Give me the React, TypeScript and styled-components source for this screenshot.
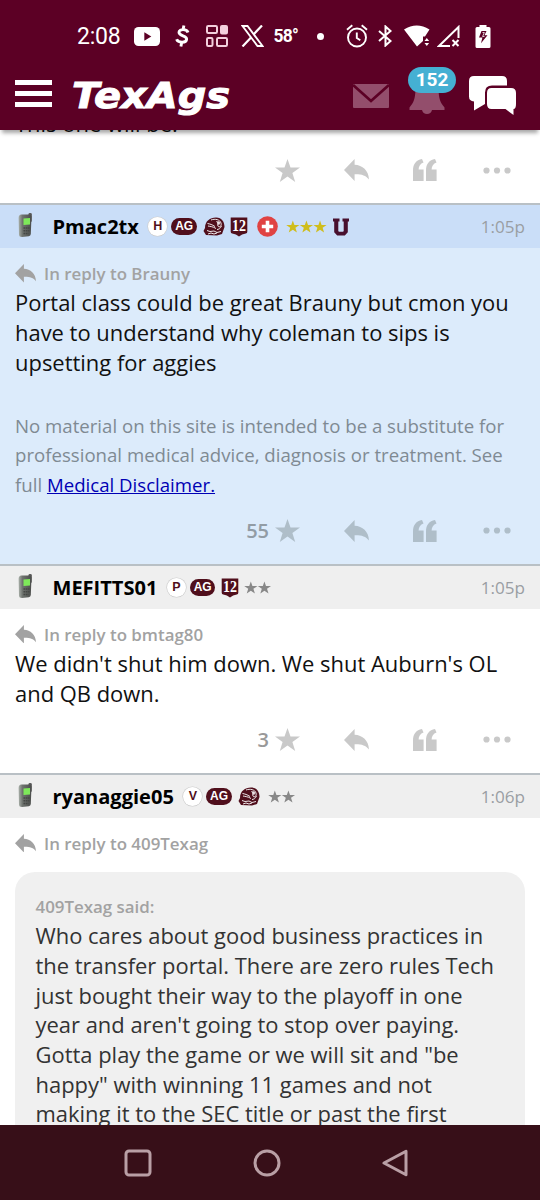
import React from "react";
import styled, { createGlobalStyle } from "styled-components";

const GlobalStyle = createGlobalStyle`
  *, *::before, *::after { box-sizing: border-box; }
  body { margin: 0; background: #fff; font-family: "Open Sans", sans-serif; }
  svg { display: block; flex: none; }
`;

const Screen = styled.div`
  width: 540px;
  height: 1200px;
  display: flex;
  flex-direction: column;
  overflow: hidden;
  background: #fff;
`;

const Top = styled.header`
  position: relative;
  z-index: 1;
  flex: none;
  height: 130px;
  background: #5c0025;
  box-shadow: 0 5px 4px -2px rgba(0, 0, 0, 0.35);
`;

const StatusBar = styled.div`
  height: 72px;
  display: flex;
  align-items: center;
  padding-left: 77px;
  color: #fff;
`;

const Slot = styled.div<{ $w: number; $gap?: number }>`
  flex: none;
  display: flex;
  width: ${(p) => p.$w}px;
  margin-left: ${(p) => p.$gap ?? 0}px;
`;

const Clock = styled.span`
  font: 400 23px/26px Roboto, sans-serif;
  letter-spacing: -0.2px;
  white-space: nowrap;
  padding-top: 2px;
`;

const Temp = styled.span`
  font: 700 17.5px/20px Roboto, sans-serif;
  letter-spacing: -0.8px;
  white-space: nowrap;
`;

const AppBar = styled.div`
  height: 58px;
  display: flex;
  align-items: center;
  padding: 0 24px 0 15px;
`;

const Menu = styled.div`
  display: flex;
  flex-direction: column;
  gap: 6px;
  width: 37px;
  padding-bottom: 16px;
  span { height: 5px; background: #fff; }
`;

const Logo = styled.div`
  margin: 0 auto 0 19.5px;
`;

const BarIcons = styled.div`
  display: flex;
  align-items: flex-start;
  height: 50px;
`;

const MailWrap = styled.div`
  padding-top: 8px;
`;

const BellWrap = styled.div`
  position: relative;
  margin: 0 24px 0 20px;
  padding-top: 4px;
`;

const CountBadge = styled.span`
  position: absolute;
  left: -1px;
  top: -9px;
  width: 48px;
  height: 26px;
  border-radius: 13px;
  background: #45b0d3;
  color: #fff;
  font: 700 19px/26px Roboto, sans-serif;
  text-align: center;
`;

const Feed = styled.main`
  flex: 1;
  min-height: 0;
  overflow: hidden;
`;

const Scrolled = styled.div`
  margin-top: -20.9px;
`;

const Post = styled.article<{ $hot?: boolean }>`
  --icon: ${(p) => (p.$hot ? "#afbec9" : "#c9c9c9")};
  --muted: ${(p) => (p.$hot ? "#929ca5" : "#999")};
  --head: ${(p) => (p.$hot ? "#cadef8" : "#efefef")};
  background: ${(p) => (p.$hot ? "#dcebfb" : "#fff")};
`;

const PostHead = styled.div`
  height: 45px;
  display: flex;
  align-items: center;
  border-top: 2px solid #b9c0c5;
  background: var(--head);
  padding: 0 15px 0 17px;
`;

const PhoneWrap = styled.span`
  padding-bottom: 4px;
`;

const Name = styled.b`
  margin: 0 9.5px 0 19.5px;
  font-size: 20.05px;
  line-height: 30px;
  color: #000;
  white-space: nowrap;
`;

const Time = styled.time`
  margin-left: auto;
  font-size: 17.1px;
  color: #9a9ea3;
`;

const Body = styled.div<{ $first?: boolean }>`
  padding: ${(p) => (p.$first ? 0 : 10)}px 15px 0;
`;

const ReplyTo = styled.div`
  display: flex;
  align-items: center;
  gap: 8px;
  height: 30px;
  font-size: 16.9px;
  font-weight: 600;
  color: #a2a2a2;
  white-space: nowrap;
`;

const Text = styled.p<{ $soft?: boolean }>`
  margin: 0;
  font-size: 21.95px;
  line-height: 29.7px;
  white-space: nowrap;
  color: ${(p) => (p.$soft ? "#333" : "#111")};
`;

const Disclaimer = styled.p`
  margin: 33px 0 0;
  font-size: 18.64px;
  line-height: 29.7px;
  white-space: nowrap;
  color: #7f8a93;
  a { color: #0000b4; text-decoration: underline; }
`;

const Actions = styled.div`
  height: 64.6px;
  display: flex;
  align-items: center;
  justify-content: flex-end;
  padding: 0 29px 2px 0;
`;

const Likes = styled.span`
  margin-right: 6px;
  font-size: 20px;
  font-weight: 600;
  color: var(--muted);
`;

const ActionIcon = styled.span<{ $gap?: number }>`
  margin-left: ${(p) => p.$gap ?? 0}px;
  color: var(--icon);
`;

const Quote = styled.blockquote`
  margin: 14px 0 0;
  padding: 20px 20px 20px 20.5px;
  border-radius: 20px;
  background: #f0f0f0;
`;

const QuoteAuthor = styled.div`
  height: 29px;
  font-size: 16.9px;
  line-height: 30px;
  font-weight: 600;
  color: #a2a2a2;
`;

const Letter = styled.span`
  width: 19px;
  height: 19px;
  border-radius: 50%;
  background: #fff;
  box-shadow: 0 0 0 0.6px #ccc;
  color: #500f1c;
  font: 700 12.5px/19px "Liberation Sans", sans-serif;
  text-align: center;
`;

const AgPill = styled.span`
  width: 25.5px;
  height: 17px;
  margin: 0 6px 0 4px;
  border-radius: 9px;
  background: #500f1c;
  color: #fff;
  font: 700 12px/17px "Liberation Sans", sans-serif;
  text-align: center;
`;

const BadgeGap = styled.span<{ $before?: number }>`
  margin-left: ${(p) => p.$before ?? 0}px;
`;

const NavBar = styled.nav`
  flex: none;
  height: 75px;
  display: flex;
  align-items: center;
  gap: 101px;
  padding-left: 124px;
  background: #370f18;
`;

const STAR = "M12.5 0l3 8.6h9.5l-7.6 5.5 2.8 8.9-7.7-5.4L4.8 23l2.8-8.9L0 8.6h9.5z";

function ReplyIcon({ w = 25 }: { w?: number }) {
  return (
    <svg width={w} height={(w * 22) / 25} viewBox="0 0 25 22" fill="currentColor">
      <path d="M0 11L10.6 0v5.7C18.5 6 24.6 11.3 25 20.4 21.6 16.2 17.3 15 10.6 15.2V22z" />
    </svg>
  );
}

function PostActions({ likes }: { likes?: number }) {
  return (
    <Actions>
      {likes !== undefined && <Likes>{likes}</Likes>}
      <ActionIcon>
        <svg width="25" height="23" viewBox="0 0 25 23" fill="currentColor"><path d={STAR} /></svg>
      </ActionIcon>
      <ActionIcon $gap={43.5}><ReplyIcon /></ActionIcon>
      <ActionIcon $gap={44.5}>
        <svg width="24" height="22" viewBox="0 0 24 22" fill="currentColor">
          <path d="M0 22V11.5C0 5 3.3 1 9 0l1.500 3.400C7.400 4.600 5.600 7 5.600 10.600H10.600V22z" />
          <path d="M13 22V11.500C13 5 16.300 1 22 0l1.500 3.400C20.400 4.600 18.600 7 18.600 10.600H23.600V22z" />
        </svg>
      </ActionIcon>
      <ActionIcon $gap={46}>
        <svg width="28" height="7" viewBox="0 0 28 7" fill="currentColor">
          <circle cx="3.500" cy="3.500" r="3.100" /><circle cx="14" cy="3.500" r="3.100" /><circle cx="24.500" cy="3.500" r="3.100" />
        </svg>
      </ActionIcon>
    </Actions>
  );
}

function Phone() {
  return (
    <PhoneWrap>
      <svg width="16" height="26" viewBox="0 0 16 26">
        <defs>
          <linearGradient id="shell" x1="0" x2="1">
            <stop offset="0" stopColor="#a9b0a9" />
            <stop offset=".3" stopColor="#6f736f" />
            <stop offset="1" stopColor="#4b4d4b" />
          </linearGradient>
        </defs>
        <rect x="11.500" y="1" width="3.300" height="9" rx="1.200" fill="#5c5c5c" />
        <path d="M4.500 2.500H13q1.500 0 1.500 2L13.800 22q-.2 2-2 2.200L5 25q-3 0-3-2.500L1.600 6q0-3.200 2.900-3.500z" fill="url(#shell)" />
        <path d="M6.500 6.500l6.500-.5v6.500l-6.500.5z" fill="#7ee85a" />
        <path d="M6.500 16h6M6.500 18.800h6M6.500 21.600h5" stroke="#454745" strokeWidth="1.500" strokeDasharray="1.700 .6" />
      </svg>
    </PhoneWrap>
  );
}

function Helmet() {
  return (
    <svg width="22" height="19" viewBox="0 0 22 19">
      <path d="M2 11C2 4 7 .5 13 .5S21.500 5 21.500 10L19 17l-5 1.500-11-.5-2.500-4z" fill="#500f1c" />
      <path d="M5 9c2 .5 5 .5 8 2.500M4.500 6.500C7 7 9 7.500 12 9.500M8 3c4-1.500 9-.5 10 3s-2 5-3 3 .5-3-1.500-4.500M18.500 9c-1 2.500-3 3.500-4.500 3.500M4 13.500l3 1 4-.5 3 1.500 4-1M5 17l3-1 3 1 3-1" fill="none" stroke="#fff" strokeWidth=".9" />
      <path d="M13.500 4.500q3-1 3.500 1t-1.500 2.500z" fill="#e9dfe2" />
    </svg>
  );
}

function Shield() {
  return (
    <svg width="18" height="20" viewBox="0 0 18 20">
      <path d="M.7.500h16.600v14.300q0 1.500-1.500 1.700-4 .3-6.800 3-2.800-2.700-6.800-3Q.7 16.300.7 14.800z" fill="#500f1c" />
      <text x="9" y="13.500" textAnchor="middle" textLength="14" lengthAdjust="spacingAndGlyphs" fontFamily="Liberation Serif, serif" fontWeight="700" fontSize="16.500" fill="#fff">12</text>
    </svg>
  );
}

function MedCross() {
  return (
    <svg width="21" height="21" viewBox="0 0 21 21">
      <circle cx="10.500" cy="10.500" r="10.300" fill="#e04343" />
      <path d="M10.500 4.800v11.400M4.800 10.500h11.400" stroke="#fff" strokeWidth="3.600" />
    </svg>
  );
}

function Stars({ n, color }: { n: number; color: string }) {
  return (
    <svg width={n * 13.6} height="13" viewBox={`0 0 ${n * 13.6} 13`} fill={color}>
      {Array.from({ length: n }, (_, i) => (
        <path key={i} d={STAR} transform={`translate(${i * 13.6 + 0.2} .4) scale(.53)`} />
      ))}
    </svg>
  );
}

function BlockU() {
  return (
    <svg width="16" height="18" viewBox="0 0 16 18">
      <path d="M0 .5h6.500v3H5.300v9.200q0 1 1 1h3.400q1 0 1-1V3.500H9.500v-3H16v3h-1.200v10.700l-3 3.300H4.200l-3-3.300V3.500H0z" fill="#48102e" />
    </svg>
  );
}

function Head({ name, letter, time, children }: { name: string; letter: string; time: string; children: React.ReactNode }) {
  return (
    <PostHead>
      <Phone />
      <Name>{name}</Name>
      <Letter>{letter}</Letter>
      <AgPill>AG</AgPill>
      {children}
      <Time>{time}</Time>
    </PostHead>
  );
}

function InReply({ to }: { to: string }) {
  return <ReplyTo><ReplyIcon w={21} /><span>In reply to {to}</span></ReplyTo>;
}

function StatusIcons() {
  return (
    <StatusBar>
      <Slot $w={44}><Clock>2:08</Clock></Slot>
      <Slot $w={26} $gap={13}>
        <svg width="26" height="19" viewBox="0 0 26 19"><rect width="26" height="19" rx="4.500" fill="#fff" /><path d="M10.300 5.300v8.400l7-4.200z" fill="#5c0025" /></svg>
      </Slot>
      <Slot $w={15} $gap={14.5}>
        <svg width="15" height="22" viewBox="0 0 15 22" fill="none" stroke="#fff" strokeWidth="2.900"><path d="M13 7.500C12 3.800 4 3.600 4 7.300c0 4.400 8.300 2.800 7.600 7.200C11 18.300 3 18 1.600 14.300M8.900.5L8.200 4M6.600 18l-.7 3.500" /></svg>
      </Slot>
      <Slot $w={22} $gap={16.5}>
        <svg width="22" height="22" viewBox="0 0 22 22" fill="none" stroke="#f3cfdd" strokeWidth="2"><rect x="1" y="1" width="10" height="7" rx="1.200" /><rect x="15" y="1" width="6" height="7.500" rx="1" fill="#f3cfdd" /><rect x="1" y="13" width="5.500" height="8" rx="1.200" /><rect x="11" y="13" width="10" height="8" rx="1.200" /></svg>
      </Slot>
      <Slot $w={23} $gap={13}>
        <svg width="23" height="22" viewBox="0 0 23 22" fill="none" stroke="#fff"><path d="M1.500 1h5L21.500 21h-5z" strokeWidth="1.900" /><path d="M21 .5l-8.500 9M10 12.500L1.500 21.500" strokeWidth="2.200" /></svg>
      </Slot>
      <Slot $w={25} $gap={9.5}><Temp>58°</Temp></Slot>
      <Slot $w={7} $gap={18.5}>
        <svg width="7" height="7" viewBox="0 0 7 7"><circle cx="3.500" cy="3.500" r="3.500" fill="#fff" /></svg>
      </Slot>
      <Slot $w={22} $gap={22}>
        <svg width="22" height="24" viewBox="0 0 22 24" fill="none" stroke="#fff" strokeWidth="1.900"><circle cx="11" cy="13.500" r="9" /><path d="M10.800 8.500v5.500l3.500 2.200M1 5.800l5.300-4.500M21 5.800l-5.300-4.500" /></svg>
      </Slot>
      <Slot $w={15} $gap={10}>
        <svg width="15" height="22" viewBox="0 0 15 22" fill="none" stroke="#fff" strokeWidth="2"><path d="M1 6l11.500 10L7.500 20.500v-19L12.500 6 1 16" /></svg>
      </Slot>
      <Slot $w={26} $gap={11}>
        <svg width="26" height="22" viewBox="0 0 26 22" fill="#fff"><path d="M0 4.500Q12.700-3.500 25.500 4.500L21 11.500h-2v4.500L13 21.500z" /><path d="M20.500 16l2.300-3 2.300 3zM20.500 18l2.300 3 2.300-3z" /></svg>
      </Slot>
      <Slot $w={24} $gap={6.5}>
        <svg width="24" height="23" viewBox="0 0 24 23" fill="none" stroke="#fff" strokeWidth="2"><path d="M13 21H2L21.500 2v11M15.500 15l6 6M21.500 15l-6 6" /></svg>
      </Slot>
      <Slot $w={15} $gap={14.5}>
        <svg width="16" height="23" viewBox="0 0 16 23"><path d="M4.500 0h7v2H14q1.500 0 1.500 1.500v18Q15.500 23 14 23H2Q.5 23 .5 21.500v-18Q.5 2 2 2h2.500z" fill="#fff" /><path d="M6.500 6h5L9.500 10.300h3L6 18.200l1.400-5.700H4z" fill="#5c0025" /><path d="M7.500 7.500h1.800l-1.700 4H9.500" stroke="#fff" strokeWidth=".8" fill="none" /></svg>
      </Slot>
    </StatusBar>
  );
}

export default function App() {
  return (
    <>
      <GlobalStyle />
      <Screen>
        <Top>
          <StatusIcons />
          <AppBar>
            <Menu><span /><span /><span /></Menu>
            <Logo>
              <svg width="162" height="50" viewBox="0 0 162 50">
                <text x="0" y="31.500" textLength="158" lengthAdjust="spacingAndGlyphs" fontFamily="DejaVu Sans, sans-serif" fontWeight="700" fontStyle="italic" fontSize="35.500" fill="#fff" stroke="#fff" strokeWidth="1">TexAgs</text>
              </svg>
            </Logo>
            <BarIcons>
              <MailWrap>
                <svg width="36" height="24" viewBox="0 0 36 24"><rect width="36" height="24" rx="1" fill="#934e6c" /><path d="M0 1l18 16L36 1" fill="none" stroke="#5c0025" strokeWidth="2.800" /></svg>
              </MailWrap>
              <BellWrap>
                <svg width="36" height="34" viewBox="0 0 36 34" fill="#934e6c"><path d="M18 0c-7 0-11 4-11.500 10C6 19 5 22 .5 27.500V30H13q1 4 5 4t5-4h12.500v-2.500C31 22 30 19 29.500 10 29 4 25 0 18 0z" /></svg>
                <CountBadge>152</CountBadge>
              </BellWrap>
              <svg width="47" height="39" viewBox="0 0 47 39" fill="#fff"><path d="M5 0h28q5 0 5 5v4.500H23q-7 0-7 7V28L5 34.500V25.500Q0 25 0 20.500V5q0-5 5-5z" /><path d="M22.500 12H42q5 0 5 5v11q0 5-2.500 5v6l-8-6h-14q-4.500 0-4.500-5V17q0-5 4.500-5z" /></svg>
            </BarIcons>
          </AppBar>
        </Top>

        <Feed>
          <Scrolled>
            <Post>
              <Body $first><Text>This one will be.</Text></Body>
              <PostActions />
            </Post>

            <Post $hot>
              <Head name="Pmac2tx" letter="H" time="1:05p">
                <Helmet />
                <BadgeGap $before={5}><Shield /></BadgeGap>
                <BadgeGap $before={9}><MedCross /></BadgeGap>
                <BadgeGap $before={8}><Stars n={3} color="#cfbd1c" /></BadgeGap>
                <BadgeGap $before={6}><BlockU /></BadgeGap>
              </Head>
              <Body>
                <InReply to="Brauny" />
                <Text>
                  Portal class could be great Brauny but cmon you<br />
                  have to understand why coleman to sips is<br />
                  upsetting for aggies
                </Text>
                <Disclaimer>
                  No material on this site is intended to be a substitute for<br />
                  professional medical advice, diagnosis or treatment. See<br />
                  full <a>Medical Disclaimer.</a>
                </Disclaimer>
              </Body>
              <PostActions likes={55} />
            </Post>

            <Post>
              <Head name="MEFITTS01" letter="P" time="1:05p">
                <Shield />
                <BadgeGap $before={4.5}><Stars n={2} color="#888" /></BadgeGap>
              </Head>
              <Body>
                <InReply to="bmtag80" />
                <Text>
                  We didn't shut him down. We shut Auburn's OL<br />
                  and QB down.
                </Text>
              </Body>
              <PostActions likes={3} />
            </Post>

            <Post>
              <Head name="ryanaggie05" letter="V" time="1:06p">
                <Helmet />
                <BadgeGap $before={8.5}><Stars n={2} color="#888" /></BadgeGap>
              </Head>
              <Body>
                <InReply to="409Texag" />
                <Quote>
                  <QuoteAuthor>409Texag said:</QuoteAuthor>
                  <Text $soft>
                    Who cares about good business practices in<br />
                    the transfer portal. There are zero rules Tech<br />
                    just bought their way to the playoff in one<br />
                    year and aren't going to stop over paying.<br />
                    Gotta play the game or we will sit and "be<br />
                    happy" with winning 11 games and not<br />
                    making it to the SEC title or past the first
                  </Text>
                </Quote>
              </Body>
            </Post>
          </Scrolled>
        </Feed>

        <NavBar>
          <svg width="28" height="28" viewBox="0 0 28 28" fill="none" stroke="#b99fa5" strokeWidth="3"><rect x="2" y="2" width="24" height="24" rx="3" /></svg>
          <svg width="28" height="28" viewBox="0 0 28 28" fill="none" stroke="#b99fa5" strokeWidth="3"><circle cx="14" cy="14" r="12" /></svg>
          <svg width="27" height="28" viewBox="0 0 27 28" fill="none" stroke="#b99fa5" strokeWidth="3" strokeLinejoin="round"><path d="M2 14L24 2.200v23.600z" /></svg>
        </NavBar>
      </Screen>
    </>
  );
}
